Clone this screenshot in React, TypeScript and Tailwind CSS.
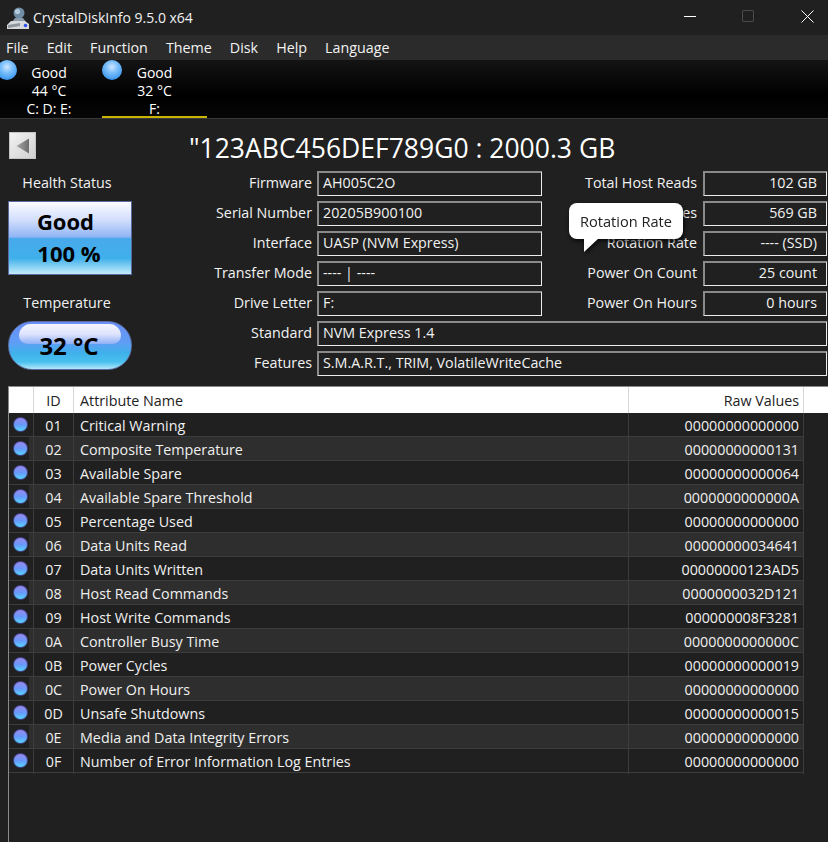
const FONT = "font-['Open_Sans','Noto_Sans',sans-serif]";

function Dot({ className }: { className: string }) {
  return (
    <span
      className={`block shrink-0 rounded-full border border-[#45458a] bg-[linear-gradient(#9a88f0,#6a98fa_50%,#55d4ff)] ${className}`}
    />
  );
}

function TabDot({ className }: { className: string }) {
  return (
    <span
      className={`block shrink-0 rounded-full bg-[radial-gradient(circle_at_50%_35%,#cfe6ff_0%,#7cc0fb_35%,#3f9af0_75%,#2a6fc0_100%)] ${className}`}
    />
  );
}

function AppIcon() {
  return (
    <svg width="24" height="22" viewBox="0 0 24 22" className="shrink-0">
      <circle cx="13" cy="6" r="5.5" fill="#6f8ea6" />
      <circle cx="11.5" cy="4.5" r="2.6" fill="#b4cadb" />
      <path d="M9 11 L17 11 L20 15 L6 15 Z" fill="#8a99a8" />
      <path d="M5 14 L19 14 L23 17 L23 22 L1 22 L1 18 Z" fill="#d6d9de" />
      <path d="M2 18 L14 16 L14 19 L2 21 Z" fill="#8f959e" />
      <circle cx="19.5" cy="18.5" r="1.8" fill="#2f55e8" />
    </svg>
  );
}

function Tab({ dot, good, temp, letters, active, w }: { dot: string; good: string; temp: string; letters: string; active?: boolean; w: string }) {
  return (
    <div className={`relative flex flex-col items-center text-[14px] leading-[18px] text-white ${w} ${active ? "border-b-2 border-[#c8b400]" : ""}`}>
      <TabDot className={`absolute top-0 h-5 w-5 ${dot}`} />
      <span className="pt-[4px]">{good}</span>
      <span>{temp}</span>
      <span>{letters}</span>
    </div>
  );
}

function Field({ value, right, className }: { value: string; right?: boolean; className: string }) {
  return (
    <div
      className={`flex h-[25px] items-center border border-t-2 border-l-2 border-t-[#8a8a8a] border-l-[#8a8a8a] border-r-[#ececec] border-b-[#ececec] pb-[2px] pl-[4px] text-[14.3px] text-[#f2f2f2] ${right ? "justify-end pr-[9px]" : "pr-[4px]"} ${className}`}
    >
      {value}
    </div>
  );
}

function Label({ text, className = "" }: { text: string; className?: string }) {
  return <div className={`h-[25px] text-right text-[14.3px] leading-[23px] text-[#f2f2f2] ${className}`}>{text}</div>;
}

const rows: [string, string, string][] = [
  ["01", "Critical Warning", "00000000000000"],
  ["02", "Composite Temperature", "00000000000131"],
  ["03", "Available Spare", "00000000000064"],
  ["04", "Available Spare Threshold", "0000000000000A"],
  ["05", "Percentage Used", "00000000000000"],
  ["06", "Data Units Read", "00000000034641"],
  ["07", "Data Units Written", "00000000123AD5"],
  ["08", "Host Read Commands", "0000000032D121"],
  ["09", "Host Write Commands", "000000008F3281"],
  ["0A", "Controller Busy Time", "0000000000000C"],
  ["0B", "Power Cycles", "00000000000019"],
  ["0C", "Power On Hours", "00000000000000"],
  ["0D", "Unsafe Shutdowns", "00000000000015"],
  ["0E", "Media and Data Integrity Errors", "00000000000000"],
  ["0F", "Number of Error Information Log Entries", "00000000000000"],
];

const info: [string, string, string, string][] = [
  ["Firmware", "AH005C2O", "Total Host Reads", "102 GB"],
  ["Serial Number", "20205B900100", "Total Host Writes", "569 GB"],
  ["Interface", "UASP (NVM Express)", "Rotation Rate", "---- (SSD)"],
  ["Transfer Mode", "---- | ----", "Power On Count", "25 count"],
  ["Drive Letter", "F:", "Power On Hours", "0 hours"],
];

export default function App() {
  return (
    <div className={`relative flex h-[842px] w-[828px] flex-col overflow-hidden bg-[#202020] ${FONT}`}>
      {/* title bar */}
      <div className="flex h-[35px] items-center">
        <div className="ml-[6px] mr-[3px]"><AppIcon /></div>
        <span className="text-[14px] text-[#f2f2f2]">CrystalDiskInfo 9.5.0 x64</span>
        <div className="ml-auto flex items-center pb-[3px]">
          <span className="mr-[46px] h-[1px] w-3 bg-white" />
          <span className="mr-[47px] h-3 w-3 rounded-[1px] border border-[#4a4a4a]" />
          <svg width="13" height="13" viewBox="0 0 13 13" className="mr-[14px]">
            <path d="M0.5 0.5 L12.5 12.5 M12.5 0.5 L0.5 12.5" stroke="#ffffff" strokeWidth="1" />
          </svg>
        </div>
      </div>
      {/* menu */}
      <div className="flex h-[25px] items-center gap-[18px] bg-[#2b2b2b] pl-[6px] text-[14.3px] text-[#f2f2f2]">
        {["File", "Edit", "Function", "Theme", "Disk", "Help", "Language"].map((m) => (
          <span key={m}>{m}</span>
        ))}
      </div>
      {/* tabs */}
      <div className="flex h-[59px] border-b border-[#3a3a3a] bg-[linear-gradient(#141414,#000_60%,#060606)]">
        <Tab dot="left-[-3px]" good="Good" temp="44 °C" letters="C: D: E:" w="w-[98px] mr-[4px]" />
        <Tab dot="left-0" good="Good" temp="32 °C" letters="F:" active w="w-[105px]" />
      </div>
      {/* title row */}
      <div className="flex h-[51px] items-center pl-[9px]">
        <div className="mt-[2px] flex h-[27px] w-[27px] items-center justify-center border border-[#c4c4c4] bg-[linear-gradient(135deg,#f2f2f2,#d0d0d0)]">
          <svg width="14" height="16" viewBox="0 0 14 16">
            <defs>
              <linearGradient id="tri" x1="0" x2="1" y1="0" y2="0">
                <stop offset="0" stopColor="#a8a8a8" />
                <stop offset="1" stopColor="#6c6c6c" />
              </linearGradient>
            </defs>
            <path d="M13 0.5 L13 15.5 L0.5 8 Z" fill="url(#tri)" />
          </svg>
        </div>
        <span className="ml-[153px] mt-[7px] whitespace-nowrap text-[26.5px] leading-none text-white">"123ABC456DEF789G0 : 2000.3 GB</span>
      </div>
      {/* info */}
      <div className="relative flex h-[216px] items-start pt-[1px]">
        <div className="ml-[8px] flex w-[124px] flex-col items-center">
          <div className="h-[25px] pr-[6px] text-[14.3px] leading-[23px] text-[#f2f2f2]">Health Status</div>
          <div className="mt-[5px] flex h-[74px] w-[124px] flex-col items-center justify-center border border-[#5a6aa0] bg-[linear-gradient(#fbfbff_0%,#d2defc_25%,#8fb4f4_49%,#49a9ec_50%,#3fb0ea_78%,#c4ecfa_100%)] pb-[2px] text-[22px] font-bold leading-[32px] text-black">
            <span className="pr-[9px]">Good</span>
            <span className="pr-[2px]">100 %</span>
          </div>
          <div className="mt-[16px] h-[25px] pr-[6px] text-[14.3px] leading-[24px] text-[#f2f2f2]">Temperature</div>
          <div className="relative mt-[5px] flex h-[49px] w-[124px] items-center justify-center rounded-[24px] border border-[#5a6aa0] bg-[linear-gradient(#6a8ef5_0%,#5f9ef5_45%,#3fb0ea_65%,#49c0ef_85%,#b4e8fa_100%)] text-[24px] font-bold text-black">
            <span className="absolute left-[10px] right-[10px] top-[2px] h-[20px] rounded-t-[14px] rounded-b-[10px] bg-[linear-gradient(#f4f4ff,#dfe4fd_50%,#8fb0f6)]" />
            <span className="relative mt-[1px] pr-[2px]">32 °C</span>
          </div>
        </div>
        <div className="grid grid-cols-[180px_225px_151px_124px] items-center gap-x-[5px] gap-y-[5px]">
          {info.map(([a, b, c, d]) => (
            <div key={a} className="contents">
              <Label text={a} />
              <Field value={b} className="w-[225px]" />
              <Label text={c} className="pr-[1px]" />
              <Field value={d} right className="w-[124px]" />
            </div>
          ))}
          <Label text="Standard" />
          <Field value="NVM Express 1.4" className="col-span-3 w-[510px]" />
          <Label text="Features" />
          <Field value="S.M.A.R.T., TRIM, VolatileWriteCache" className="col-span-3 w-[510px]" />
        </div>
        {/* tooltip */}
        <div className="absolute left-[569px] top-[33px] drop-shadow-[1px_2px_2px_rgba(0,0,0,0.8)]">
          <div className="flex h-[36px] w-[114px] items-center justify-center rounded-[8px] bg-white pt-[1px] text-[14.6px] text-[#222]">Rotation Rate</div>
          <svg width="16" height="15" viewBox="0 0 16 15" className="ml-[15px] mt-[-1px] block">
            <path d="M0 0 L15 0 L0 14 Z" fill="#ffffff" />
          </svg>
        </div>
      </div>
      {/* table */}
      <div className="ml-[8px] flex-1 border-l border-t border-[#8a8a8a]">
        <div className="grid h-[26px] grid-cols-[25px_40px_555px_175px_1fr] bg-white text-[14.3px] leading-[28px] text-[#222]">
          <div className="border-r border-[#d8d8d8]" />
          <div className="border-r border-[#d8d8d8] text-center">ID</div>
          <div className="border-r border-[#d8d8d8] pl-[6px]">Attribute Name</div>
          <div className="border-r border-[#d8d8d8] pr-[4px] text-right">Raw Values</div>
          <div />
        </div>
        {rows.map(([id, name, raw], i) => (
          <div key={id} className="relative flex h-[24px] w-[795px] text-[14.3px] leading-[25px] text-[#f0f0f0]">
            <div className={`grid flex-1 grid-cols-[25px_40px_555px_175px] border-b border-[#3c3c3c] ${i % 2 ? "bg-[linear-gradient(90deg,#202020_20px,#2e2e2e_20px)]" : ""}`}>
              <div className="border-r border-[#3c3c3c]" />
              <div className="border-r border-[#3c3c3c] text-center">{id}</div>
              <div className="border-r border-[#3c3c3c] pl-[6px]">{name}</div>
              <div className="border-r border-[#3c3c3c] pr-[4px] text-right">{raw}</div>
            </div>
            <Dot className="absolute left-[4px] top-[4px] h-[15px] w-[15px]" />
          </div>
        ))}
      </div>
    </div>
  );
}
